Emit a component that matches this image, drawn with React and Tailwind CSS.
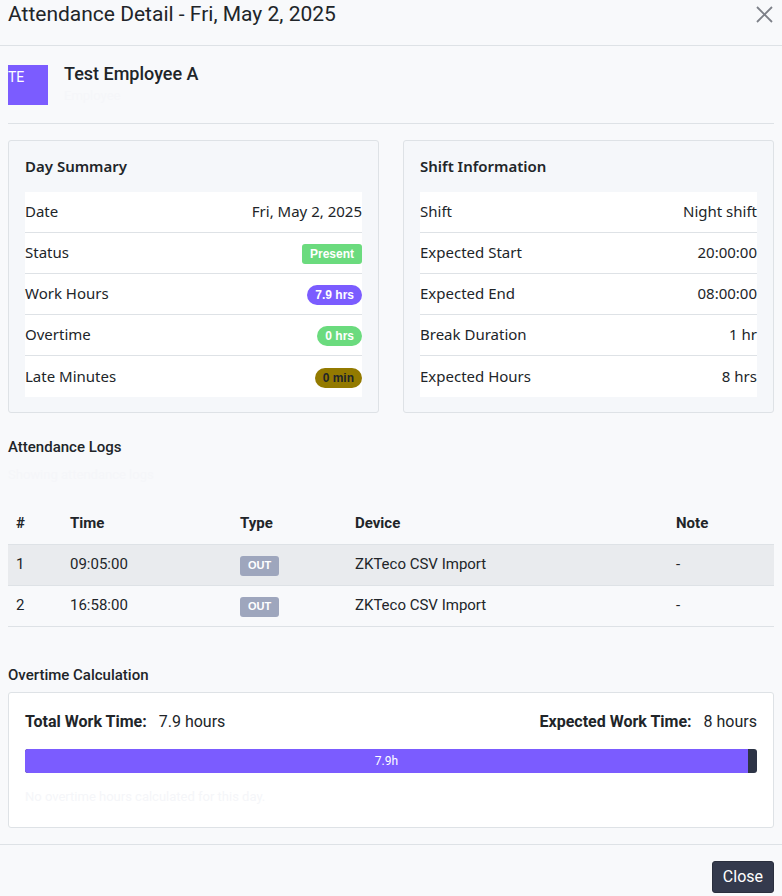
import React from "react";

const Row = ({ label, children, last }) => (
  <div className={`flex items-center justify-between h-[41px] ${last ? "" : "border-b border-[#dee2e6]"}`}>
    <span>{label}</span>
    <span>{children}</span>
  </div>
);

const Pill = ({ cls, children }) => (
  <span className={`inline-flex items-center h-[20px] px-[8px] text-[12px] font-bold font-['Liberation_Sans',sans-serif] ${cls}`}>
    {children}
  </span>
);

const cols = "grid grid-cols-[54px_170px_115px_321px_1fr]";

export default function App() {
  return (
    <div className="min-h-[896px] w-[782px] bg-[#f8f9fb] text-[#212529] font-['Roboto',sans-serif] text-[15px]">
      {/* Header */}
      <div className="h-[46px] flex items-start justify-between px-[8px] border-b border-[#dee2e6]">
        <h1 className="text-[21px] leading-[28px] mt-0 text-[#212529]">Attendance Detail - Fri, May 2, 2025</h1>
        <svg className="mt-[6px] mr-[1px]" width="17" height="17" viewBox="0 0 17 17">
          <path d="M1 1L16 16M16 1L1 16" stroke="#7d8088" strokeWidth="1.8" />
        </svg>
      </div>

      <div className="px-[8px]">
        {/* Employee */}
        <div className="flex pt-[19px] pb-[17px] border-b border-[#dee2e6]">
          <div className="w-[40px] h-[40px] bg-[#7b5cff] text-white text-[14px] leading-[24px]">TE</div>
          <div className="ml-[16px]">
            <div className="text-[18px] font-medium leading-[20px] mt-[-1px]">Test Employee A</div>
            <div className="text-[13px] text-[#f5f6f9] mt-[2px]">Employee</div>
          </div>
        </div>

        {/* Cards */}
        <div className="grid grid-cols-2 gap-[24px] mt-[16px]">
          {[
            {
              title: "Day Summary",
              rows: [
                ["Date", "Fri, May 2, 2025"],
                ["Status", <Pill cls="bg-[#6bdb7e] text-white rounded-[3px]">Present</Pill>],
                ["Work Hours", <Pill cls="bg-[#7b5cff] text-white rounded-full">7.9 hrs</Pill>],
                ["Overtime", <Pill cls="bg-[#6bdb7e] text-white rounded-full">0 hrs</Pill>],
                ["Late Minutes", <Pill cls="bg-[#937a00] text-[#212529] rounded-full">0 min</Pill>],
              ],
            },
            {
              title: "Shift Information",
              rows: [
                ["Shift", "Night shift"],
                ["Expected Start", "20:00:00"],
                ["Expected End", "08:00:00"],
                ["Break Duration", "1 hr"],
                ["Expected Hours", "8 hrs"],
              ],
            },
          ].map((card) => (
            <div key={card.title} className="border border-[#dee2e6] rounded-[3px] bg-[#f5f7fa] px-[16px] pt-[15px] pb-[15px]">
              <div className="font-['Noto_Sans',sans-serif] font-semibold text-[15px] leading-[20px] mb-[16px]">{card.title}</div>
              <div className="bg-white font-['Noto_Sans',sans-serif] text-[15px]">
                {card.rows.map(([l, v], i) => (
                  <Row key={l} label={l} last={i === card.rows.length - 1}>{v}</Row>
                ))}
              </div>
            </div>
          ))}
        </div>

        {/* Logs */}
        <div className="mt-[24px] font-medium text-[15px] leading-[20px]">Attendance Logs</div>
        <div className="text-[13px] text-[#f5f6f9] mt-[9px] leading-[18px]">Showing attendance logs</div>
        <div className="mt-[20px]">
          <div className={`${cols} h-[41px] items-center font-bold px-[8px] border-b border-[#dee2e6]`}>
            <span>#</span><span>Time</span><span>Type</span><span>Device</span><span>Note</span>
          </div>
          {[["1", "09:05:00", "bg-[#e9ebee]"], ["2", "16:58:00", ""]].map(([n, t, bg]) => (
            <div key={n} className={`${cols} h-[41px] items-center px-[8px] border-b border-[#dee2e6] ${bg}`}>
              <span>{n}</span>
              <span>{t}</span>
              <span>
                <span className="inline-flex items-center h-[20px] px-[8px] rounded-[3px] bg-[#9ea6bd] text-white text-[11px] font-bold font-['Liberation_Sans',sans-serif]">OUT</span>
              </span>
              <span>ZKTeco CSV Import</span>
              <span>-</span>
            </div>
          ))}
        </div>

        {/* Overtime */}
        <div className="mt-[38px] font-medium text-[15px] leading-[20px]">Overtime Calculation</div>
        <div className="mt-[7px] bg-white border border-[#dee2e6] rounded-[3px] px-[16px] pt-[18px] pb-[21px]">
          <div className="flex justify-between leading-[22px] text-[16px]">
            <div><span className="font-bold">Total Work Time:</span><span className="ml-[12px]">7.9 hours</span></div>
            <div><span className="font-bold">Expected Work Time:</span><span className="ml-[12px]">8 hours</span></div>
          </div>
          <div className="mt-[16px] h-[24px] flex rounded-[3px] overflow-hidden bg-[#2d3446]">
            <div className="bg-[#7b5cff] text-white text-[12px] flex items-center justify-center" style={{ width: `${(7.9 / 8) * 100}%` }}>
              7.9h
            </div>
          </div>
          <div className="mt-[15px] text-[13px] text-[#f5f6f9] leading-[18px]">No overtime hours calculated for this day.</div>
        </div>
      </div>

      {/* Footer */}
      <div className="mt-[16px] border-t border-[#dee2e6] flex justify-end px-[8px] pt-[16px] pb-[2px]">
        <button className="bg-[#343a4d] text-white text-[16px] h-[32px] px-[10px] rounded-[3px] border border-[#2a2f3e]">Close</button>
      </div>
    </div>
  );
}
